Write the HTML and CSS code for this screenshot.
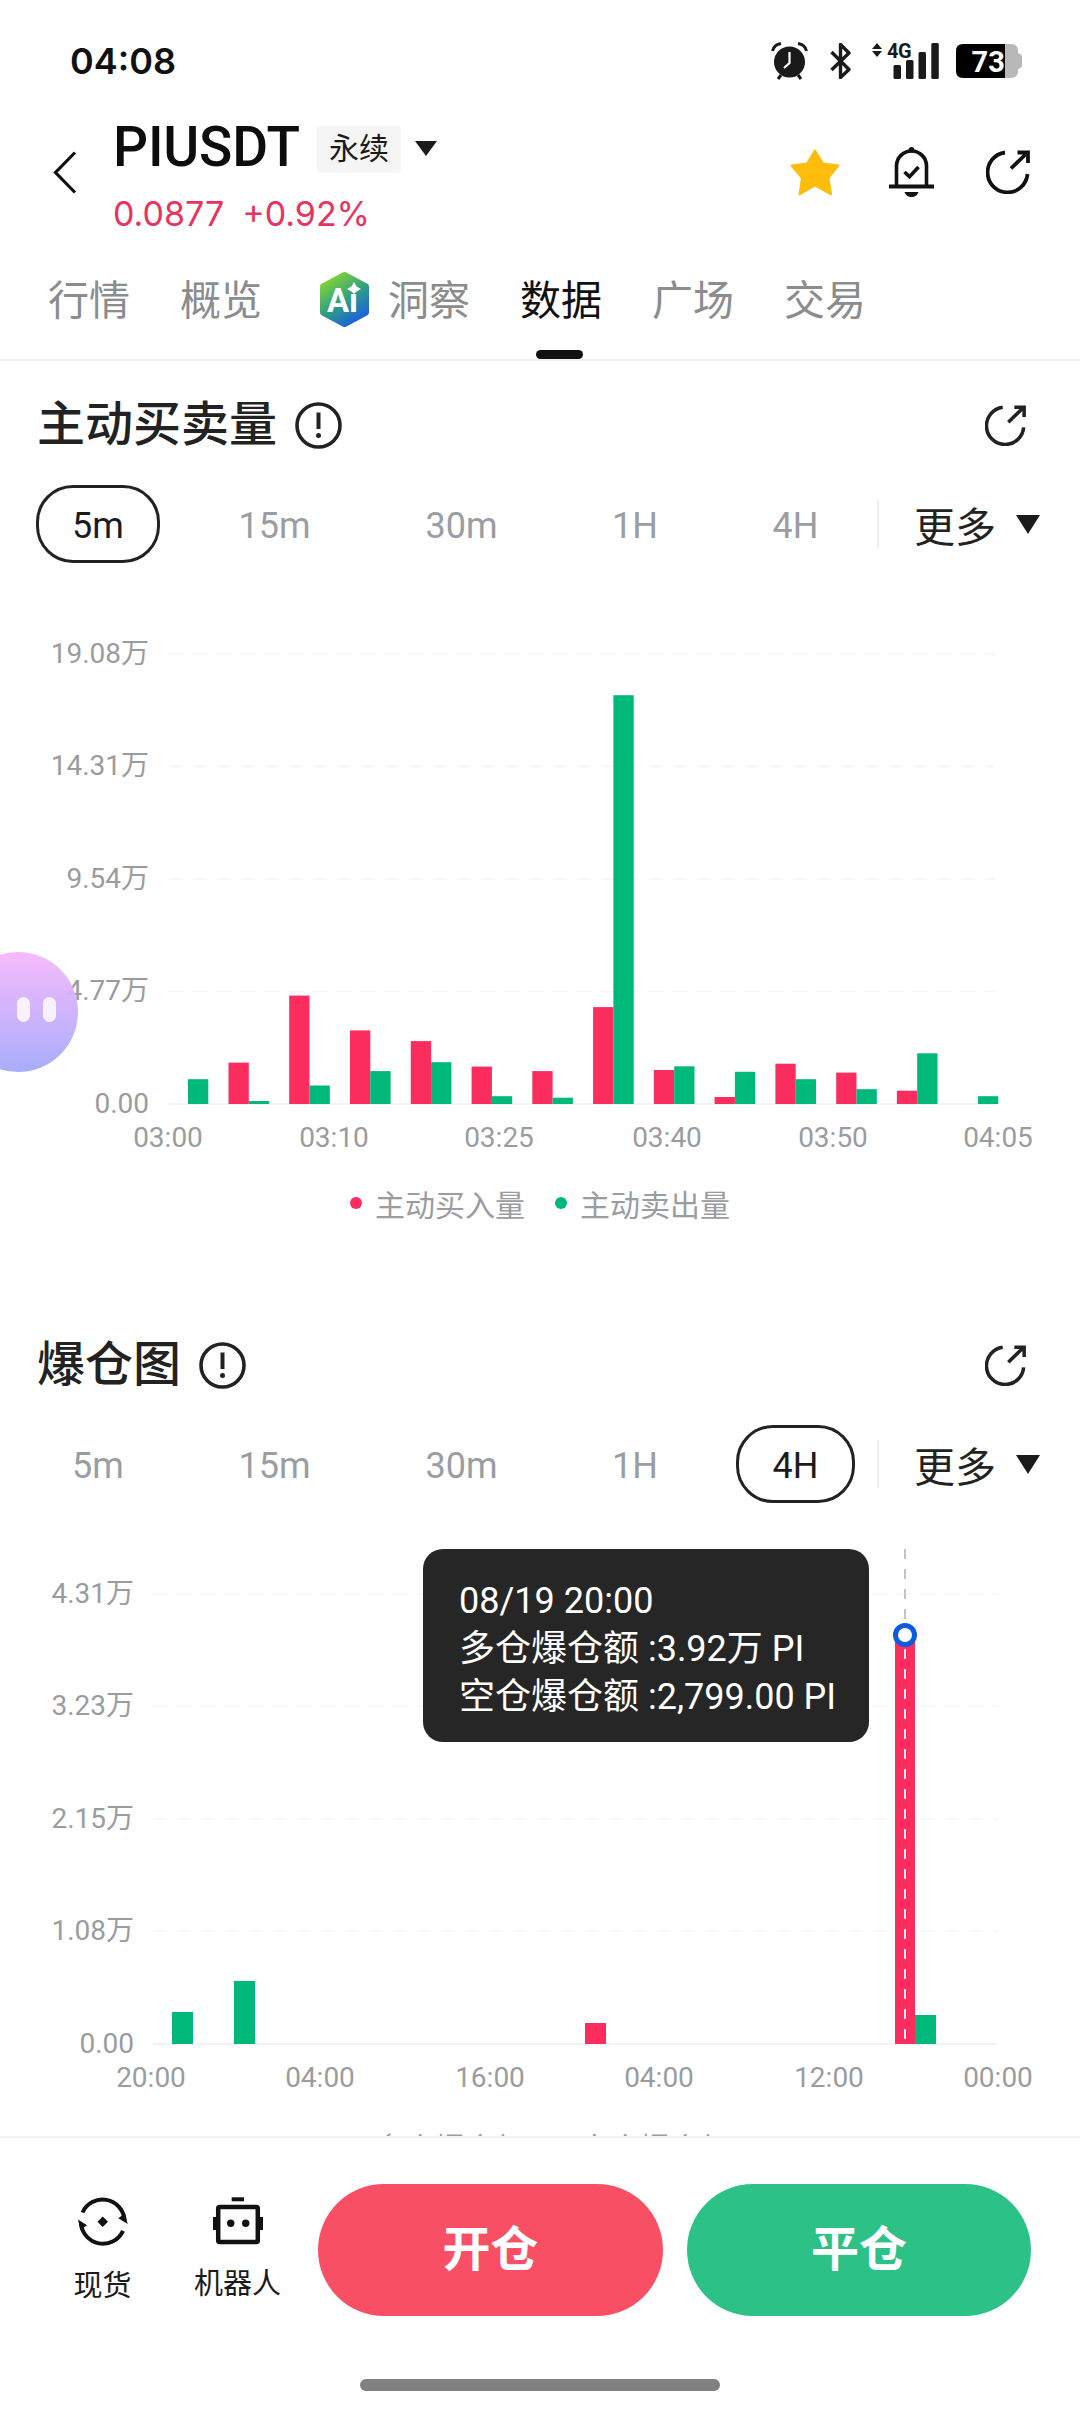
FILE: index.html
```html
<!DOCTYPE html>
<html lang="zh-CN">
<head>
    <meta charset="UTF-8">
    <meta name="viewport" content="width=device-width, initial-scale=1.0">
    <title>PIUSDT 数据</title>
    <link rel="stylesheet" href="styles.css">
</head>

<body>
<div class="page">
    <!-- 状态栏 -->
    <div class="status">
        <span class="time">04:08</span>
        <div class="status-icons">
            <svg class="ic-alarm" width="37" height="38" viewBox="0 0 37 38">
                <circle cx="18.5" cy="20" r="15.5" fill="#1a1a1a"/>
                <path d="M18.5 10V21L13 26" fill="none" stroke="#fff" stroke-width="2.2"/>
                <path d="M1.5 9Q3 2.5 10 1.5M35.5 9Q34 2.5 27 1.5M7 37L10 33M30 37L27 33" fill="none" stroke="#1a1a1a" stroke-width="3"/>
            </svg>
            <svg class="ic-bt" width="21" height="36" viewBox="0 0 21 36">
                <path d="M1.5 9L19 26.5L10.5 34.5V1.5L19 10L1.5 27" fill="none" stroke="#1a1a1a" stroke-width="3.4" stroke-linejoin="round"/>
            </svg>
            <svg class="ic-signal" width="67" height="36" viewBox="0 0 67 36">
                <path d="M0 6L5 0L10 6ZM0 8H10L5 14Z" fill="#1a1a1a"/>
                <text class="net-text" x="15" y="15">4G</text>
                <rect x="21.5" y="22" width="7.5" height="14" rx="1.5"/>
                <rect x="34" y="17" width="7.5" height="19" rx="1.5"/>
                <rect x="46.5" y="9" width="7.5" height="27" rx="1.5"/>
                <rect x="59.3" y="0" width="7.5" height="36" rx="1.5"/>
            </svg>
            <svg class="ic-battery" width="66" height="34" viewBox="0 0 66 34">
                <path d="M49 0H55Q62 0 62 7V9Q66 10 66 13V21Q66 24 62 25V27Q62 34 55 34H49Z" fill="#b8b8b8"/>
                <path d="M7 0H49V34H7Q0 34 0 27V7Q0 0 7 0Z" fill="#000"/>
                <text class="batt-text" x="15.5" y="28">73</text>
            </svg>
        </div>
    </div>

    <!-- 标题 -->
    <div class="header">
        <svg class="back" width="24" height="43" viewBox="0 0 24 43">
            <path d="M22 1.5L2.5 21.5L22 41.5" fill="none" stroke="#111" stroke-width="3.2"/>
        </svg>
        <div class="title-block">
            <div class="title-line">
                <span class="symbol">PIUSDT</span>
                <span class="tag">永续</span>
                <span class="tri tri-title"></span>
            </div>
            <div class="price-line"><span>0.0877</span><span>+0.92%</span></div>
        </div>
        <div class="actions">
            <svg width="50" height="47" viewBox="0 0 50 47">
                <path d="M25 1.5L33 14.5L48.5 16.5L38.5 29L41 45.5L25 36.5L9.5 45.5L12 29L1.5 16.5L17 14.5Z" fill="#fdbd0a" stroke="#fdbd0a" stroke-width="2" stroke-linejoin="round"/>
            </svg>
            <svg width="45" height="50" viewBox="0 0 45 50">
                <circle cx="22.5" cy="2.8" r="2.8" fill="#111"/>
                <path d="M7.5 38V19A15 15 0 0 1 37.5 19V38" fill="none" stroke="#111" stroke-width="3.6"/>
                <path d="M0 39.5H45" stroke="#111" stroke-width="4"/>
                <path d="M15.5 45H29.5Q28 50 22.5 50Q17 50 15.5 45Z" fill="#111"/>
                <path d="M15.5 25L20.5 29.8L29.5 20" fill="none" stroke="#111" stroke-width="3.6"/>
            </svg>
            <svg class="share" width="44" height="44" viewBox="0 0 44 44">
                <use href="#icon-share"/>
            </svg>
        </div>
    </div>

    <!-- 切换标签 -->
    <div class="tabs">
        <span class="tab">行情</span>
        <span class="tab">概览</span>
        <span class="tab tab-ai">
            <svg width="49" height="55" viewBox="0 0 49 55">
                <defs>
                    <linearGradient id="aiGrad" x1="0.2" y1="0.05" x2="0.75" y2="1">
                        <stop offset="0" stop-color="#7fd138"/>
                        <stop offset="0.5" stop-color="#2e9f83"/>
                        <stop offset="1" stop-color="#1a5fe0"/>
                    </linearGradient>
                </defs>
                <path d="M24.5 3L46 14.5V40.5L24.5 52L3 40.5V14.5Z" fill="url(#aiGrad)" stroke="url(#aiGrad)" stroke-width="6" stroke-linejoin="round"/>
                <text class="ai-text" x="7" y="40">A</text>
                <text class="ai-text" x="29" y="40">ı</text>
                <path d="M34 10L36.5 14.5L41 17L36.5 19.5L34 22L31.5 19.5L27 17L31.5 14.5Z" fill="#fff"/>
            </svg>
            洞察
        </span>
        <span class="tab active">数据</span>
        <span class="tab">广场</span>
        <span class="tab">交易</span>
    </div>

    <div class="content">
        <!-- 主动买卖量 -->
        <div class="section section-volume">
            <div class="section-head">
                <span class="section-title">主动买卖量</span>
                <svg class="info" width="47" height="47" viewBox="0 0 47 47"><use href="#icon-info"/></svg>
                <svg class="head-share" width="41" height="41" viewBox="0 0 44 44"><use href="#icon-share"/></svg>
            </div>
            <div class="seg-row">
                <div class="seg">
                    <span class="seg-item on">5m</span>
                    <span class="seg-item">15m</span>
                    <span class="seg-item">30m</span>
                    <span class="seg-item">1H</span>
                    <span class="seg-item">4H</span>
                </div>
                <span class="seg-line"></span>
                <span class="more">更多</span>
                <span class="tri tri-more"></span>
            </div>
            <div class="chart">
                <svg width="1080" height="610" viewBox="0 0 1080 610">
                    <g class="grid">
                        <line x1="169" x2="995" y1="91" y2="91"/>
                        <line x1="169" x2="995" y1="203.5" y2="203.5"/>
                        <line x1="169" x2="995" y1="316" y2="316"/>
                        <line x1="169" x2="995" y1="428.5" y2="428.5"/>
                    </g>
                    <line class="base" x1="169" x2="995" y1="541" y2="541"/>
                    <g class="tick tick-y">
                        <text x="149" y="100">19.08万</text>
                        <text x="149" y="212">14.31万</text>
                        <text x="149" y="325">9.54万</text>
                        <text x="149" y="437">4.77万</text>
                        <text x="149" y="550">0.00</text>
                    </g>
                    <g class="tick tick-x">
                        <text x="168" y="584">03:00</text>
                        <text x="334" y="584">03:10</text>
                        <text x="499" y="584">03:25</text>
                        <text x="667" y="584">03:40</text>
                        <text x="833" y="584">03:50</text>
                        <text x="998" y="584">04:05</text>
                    </g>
                    <g class="bar-buy">
                        <rect x="228.5" y="499.6" width="20.3" height="41.4"/>
                        <rect x="289.2" y="432.6" width="20.3" height="108.4"/>
                        <rect x="350" y="467.4" width="20.3" height="73.6"/>
                        <rect x="410.8" y="478.1" width="20.3" height="62.9"/>
                        <rect x="471.6" y="503.6" width="20.3" height="37.4"/>
                        <rect x="532.3" y="508.1" width="20.3" height="32.9"/>
                        <rect x="593.1" y="444.1" width="20.3" height="96.9"/>
                        <rect x="653.9" y="507" width="20.3" height="34"/>
                        <rect x="714.6" y="534" width="20.3" height="7"/>
                        <rect x="775.4" y="500.7" width="20.3" height="40.3"/>
                        <rect x="836.2" y="509.6" width="20.3" height="31.4"/>
                        <rect x="896.9" y="527.7" width="20.3" height="13.3"/>
                    </g>
                    <g class="bar-sell">
                        <rect x="188" y="516.2" width="20.3" height="24.8"/>
                        <rect x="248.8" y="538" width="20.3" height="3"/>
                        <rect x="309.5" y="522.5" width="20.3" height="18.5"/>
                        <rect x="370.3" y="508.1" width="20.3" height="32.9"/>
                        <rect x="431.1" y="499.2" width="20.3" height="41.8"/>
                        <rect x="491.9" y="533.2" width="20.3" height="7.8"/>
                        <rect x="552.6" y="534.7" width="20.3" height="6.3"/>
                        <rect x="613.4" y="132.2" width="20.3" height="408.8"/>
                        <rect x="674.2" y="503.3" width="20.3" height="37.7"/>
                        <rect x="734.9" y="508.8" width="20.3" height="32.2"/>
                        <rect x="795.7" y="516.2" width="20.3" height="24.8"/>
                        <rect x="856.5" y="526.2" width="20.3" height="14.8"/>
                        <rect x="917.2" y="490.3" width="20.3" height="50.7"/>
                        <rect x="978" y="533.2" width="20.3" height="7.8"/>
                    </g>
                </svg>
            </div>
            <div class="legend">
                <span class="dot dot-buy"></span><span>主动买入量</span>
                <span class="dot dot-sell"></span><span>主动卖出量</span>
            </div>
        </div>

        <!-- 爆仓图 -->
        <div class="section">
            <div class="section-head">
                <span class="section-title">爆仓图</span>
                <svg class="info" width="47" height="47" viewBox="0 0 47 47"><use href="#icon-info"/></svg>
                <svg class="head-share" width="41" height="41" viewBox="0 0 44 44"><use href="#icon-share"/></svg>
            </div>
            <div class="seg-row">
                <div class="seg">
                    <span class="seg-item">5m</span>
                    <span class="seg-item">15m</span>
                    <span class="seg-item">30m</span>
                    <span class="seg-item">1H</span>
                    <span class="seg-item on">4H</span>
                </div>
                <span class="seg-line"></span>
                <span class="more">更多</span>
                <span class="tri tri-more"></span>
            </div>
            <div class="chart">
                <svg width="1080" height="610" viewBox="0 0 1080 610">
                    <g class="grid">
                        <line x1="153" x2="997" y1="91" y2="91"/>
                        <line x1="153" x2="997" y1="203" y2="203"/>
                        <line x1="153" x2="997" y1="316" y2="316"/>
                        <line x1="153" x2="997" y1="428" y2="428"/>
                    </g>
                    <line class="base" x1="153" x2="997" y1="541" y2="541"/>
                    <g class="tick tick-y">
                        <text x="134" y="100">4.31万</text>
                        <text x="134" y="212">3.23万</text>
                        <text x="134" y="325">2.15万</text>
                        <text x="134" y="437">1.08万</text>
                        <text x="134" y="550">0.00</text>
                    </g>
                    <g class="tick tick-x">
                        <text x="151" y="584">20:00</text>
                        <text x="320" y="584">04:00</text>
                        <text x="490" y="584">16:00</text>
                        <text x="659" y="584">04:00</text>
                        <text x="829" y="584">12:00</text>
                        <text x="998" y="584">00:00</text>
                    </g>
                    <g class="bar-sell">
                        <rect x="172" y="509" width="21" height="32"/>
                        <rect x="234" y="478" width="21" height="63"/>
                        <rect x="915" y="512" width="21" height="29"/>
                    </g>
                    <g class="bar-buy">
                        <rect x="585" y="520" width="21" height="21"/>
                        <rect x="895" y="132" width="20" height="409"/>
                    </g>
                    <line class="cross" x1="905" x2="905" y1="46" y2="125"/>
                    <line class="cross cross-on" x1="905" x2="905" y1="146" y2="541"/>
                    <circle class="cross-dot" cx="905" cy="132" r="9.5"/>
                </svg>
                <div class="tooltip">
                    <div>08/19 20:00</div>
                    <div>多仓爆仓额 :3.92万 PI</div>
                    <div>空仓爆仓额 :2,799.00 PI</div>
                </div>
            </div>
            <div class="legend">
                <span class="dot dot-buy"></span><span>多仓爆仓额</span>
                <span class="dot dot-sell"></span><span>空仓爆仓额</span>
            </div>
        </div>
    </div>

    <!-- 底部操作栏 -->
    <div class="bottom">
        <div class="bottom-row">
            <div class="tool">
                <svg width="50" height="50" viewBox="0 0 50 50">
                    <path d="M4.5 15.5A22 22 0 0 1 46.5 23M45 33.8A22 22 0 0 1 3 26" fill="none" stroke="#111" stroke-width="4"/>
                    <path d="M40.3 21.3L49.7 27L47 16.3ZM9 28.3L0 22.4L2.4 33Z" fill="#111"/>
                    <path d="M24.7 19.5L30 24.7L24.7 30L19.5 24.7Z" fill="#111"/>
                </svg>
                <span>现货</span>
            </div>
            <div class="tool tool-bot">
                <svg width="52" height="48" viewBox="0 0 52 48">
                    <rect x="19.7" y="0.3" width="12.3" height="4" fill="#111"/>
                    <rect x="6.2" y="9.9" width="39.6" height="35" rx="1.5" fill="none" stroke="#111" stroke-width="4.5"/>
                    <rect x="1" y="20" width="4" height="13" fill="#111"/>
                    <rect x="47" y="20" width="4" height="13" fill="#111"/>
                    <circle cx="18.7" cy="26.3" r="3.7" fill="#111"/>
                    <circle cx="33.7" cy="26.3" r="3.7" fill="#111"/>
                </svg>
                <span>机器人</span>
            </div>
            <div class="btn btn-open">开仓</div>
            <div class="btn btn-close">平仓</div>
        </div>
        <div class="home-bar"></div>
    </div>

    <!-- 悬浮球 -->
    <div class="float-ball"><i></i><i></i></div>
</div>

<!-- 公用图标 -->
<svg class="defs" width="0" height="0">
    <symbol id="icon-share" viewBox="0 0 44 44">
        <path d="M19 2.5A20 20 0 1 0 41.5 24" fill="none" stroke="currentColor" stroke-width="3.8"/>
        <path d="M25 18.5L41 3M31.5 2.5H42V13" fill="none" stroke="currentColor" stroke-width="3.8"/>
    </symbol>
    <symbol id="icon-info" viewBox="0 0 47 47">
        <circle cx="23.5" cy="23.5" r="21.5" fill="none" stroke="currentColor" stroke-width="3.6"/>
        <path d="M23.5 10.5V27" stroke="currentColor" stroke-width="4"/>
        <circle cx="23.5" cy="33.5" r="2.5" fill="currentColor"/>
    </symbol>
</svg>
</body>
</html>
```

FILE: styles.css
```css
html, body {
    margin: 0;
    padding: 0;
    background-color: #fff;
}

body {
    font-family: Roboto, "Noto Sans CJK SC", sans-serif;
    color: #1b1b1b;
}

.page {
    position: relative;
    width: 1080px;
    height: 2412px;
    display: flex;
    flex-direction: column;
    overflow: hidden;
}

.defs {
    position: absolute;
}

/* 状态栏 */
.status {
    height: 122px;
    flex: none;
    display: flex;
    align-items: center;
    justify-content: space-between;
    padding: 0 58px 0 70px;
}

.time {
    font-family: Inter, sans-serif;
    font-size: 36px;
    font-weight: 600;
    color: #111;
}

.status-icons {
    display: flex;
    align-items: center;
}

.ic-bt {
    margin-left: 22px;
}

.ic-signal {
    margin-left: 21px;
    fill: #1a1a1a;
}

.ic-battery {
    margin-left: 17px;
}

.net-text {
    font-family: Roboto, sans-serif;
    font-size: 20px;
    font-weight: 700;
    letter-spacing: -0.5px;
}

.batt-text {
    font-family: Roboto, sans-serif;
    font-size: 29px;
    font-weight: 700;
    fill: #fff;
}

/* 标题 */
.header {
    height: 114px;
    flex: none;
    display: flex;
    align-items: flex-start;
    padding: 4px 50px 0 53px;
    box-sizing: border-box;
}

.back {
    margin-top: 25px;
}

.title-block {
    margin-left: 36px;
}

.title-line {
    height: 47px;
    display: flex;
    align-items: center;
}

.symbol {
    font-size: 55px;
    font-weight: 500;
    color: #0d0d0d;
    line-height: 47px;
    letter-spacing: -0.2px;
    margin-top: -4px;
}

.tag {
    margin-left: 17px;
    padding: 0 12px;
    height: 47px;
    line-height: 45px;
    font-size: 30px;
    background-color: #f5f5f5;
    border-radius: 4px;
}

.tri {
    width: 0;
    height: 0;
    border-style: solid;
    border-color: #1b1b1b transparent transparent transparent;
}

.tri-title {
    margin: -2px 0 0 14px;
    border-width: 15px 11px 0 11px;
}

.price-line {
    margin-top: 19px;
    display: flex;
    gap: 18px;
    font-family: Inter, sans-serif;
    font-size: 34px;
    line-height: 44px;
    color: #e8325f;
}

.actions {
    margin-left: auto;
    margin-top: 21px;
    display: flex;
    align-items: center;
    gap: 49px;
    color: #111;
}

.actions .share {
    margin-left: 3px;
}

/* 切换标签 */
.tabs {
    height: 125px;
    flex: none;
    box-sizing: border-box;
    display: flex;
    align-items: flex-start;
    gap: 50px;
    padding: 38px 0 0 48px;
    border-bottom: 2px solid #f1f1f1;
    font-size: 41px;
    line-height: 54px;
    color: #8a8c8e;
}

.tab {
    position: relative;
}

.tab-ai {
    display: flex;
    gap: 19px;
    margin-left: 8px;
    margin-top: -2px;
    line-height: 58px;
}

.ai-text {
    font-family: Roboto, sans-serif;
    font-size: 33px;
    font-weight: 700;
    fill: #fff;
}

.tab.active {
    color: #111;
}

.tab.active::after {
    content: "";
    position: absolute;
    left: 16px;
    top: 76px;
    width: 47px;
    height: 9px;
    border-radius: 5px;
    background-color: #111;
}

/* 内容区 */
.content {
    flex: 1;
    min-height: 0;
    overflow: hidden;
}

.section {
    padding-top: 41px;
}

.section-volume {
    padding-bottom: 65px;
}

.section-volume .legend {
    margin-top: -3px;
}

.section-head {
    height: 46px;
    display: flex;
    align-items: center;
    padding: 0 54px 0 37px;
    color: #222;
}

.section-title {
    font-size: 48px;
    font-weight: 500;
    line-height: 46px;
}

.info {
    margin-left: 18px;
}

.head-share {
    margin-left: auto;
}

.seg-row {
    margin-top: 37px;
    height: 78px;
    padding-left: 36px;
    display: flex;
    align-items: center;
}

.seg {
    display: grid;
    grid-template-columns: 124px 139px 145px 112px 119px;
    gap: 45px;
}

.seg-item {
    height: 78px;
    line-height: 83px;
    text-align: center;
    font-size: 36px;
    color: #9a9da1;
    border-radius: 37px;
    box-sizing: border-box;
}

.seg-item.on {
    color: #1b1b1b;
    border: 3px solid #222;
    line-height: 77px;
}

.seg-line {
    width: 2px;
    height: 48px;
    margin-left: 22px;
    background-color: #eeeeee;
}

.more {
    margin-left: 35px;
    font-size: 41px;
    color: #222;
}

.tri-more {
    margin-left: 20px;
    border-width: 19px 12px 0 12px;
}

/* 图表 */
.chart {
    position: relative;
}

.chart svg {
    display: block;
}

.grid line {
    stroke: #f5f5f5;
    stroke-width: 1.5;
    stroke-dasharray: 14 10;
}

.base {
    stroke: #f3f3f3;
    stroke-width: 2;
}

.tick text {
    font-family: Roboto, "Noto Sans CJK SC", sans-serif;
    font-size: 28px;
    fill: #9a9c9f;
}

.tick-y text {
    text-anchor: end;
}

.tick-x text {
    text-anchor: middle;
}

.bar-buy {
    fill: #fb2c5e;
}

.bar-sell {
    fill: #00b87a;
}

.cross {
    stroke: #c4c4c4;
    stroke-width: 2;
    stroke-dasharray: 10 10;
}

.cross-on {
    stroke: #f3f3f3;
}

.cross-dot {
    fill: #fff;
    stroke: #0a5be2;
    stroke-width: 5;
}

.tooltip {
    position: absolute;
    left: 423px;
    top: 46px;
    width: 446px;
    height: 193px;
    box-sizing: border-box;
    padding: 28px 0 0 36px;
    border-radius: 20px;
    background-color: #262626;
    color: #fff;
    font-size: 36px;
    line-height: 48px;
}

.legend {
    height: 66px;
    display: flex;
    align-items: center;
    justify-content: center;
    font-size: 30px;
    color: #9a9c9f;
}

.dot {
    width: 12px;
    height: 12px;
    margin-right: 13px;
    border-radius: 50%;
}

.dot-buy {
    background-color: #fb2c5e;
}

.dot-sell {
    margin-left: 30px;
    background-color: #00b87a;
}

/* 底部操作栏 */
.bottom {
    height: 276px;
    flex: none;
    box-sizing: border-box;
    border-top: 2px solid #f2f2f2;
    background-color: #fff;
}

.bottom-row {
    display: flex;
    align-items: flex-start;
    padding: 46px 49px 0 74px;
}

.tool {
    width: 57px;
    margin-top: 13px;
    display: flex;
    flex-direction: column;
    align-items: center;
    gap: 22px;
    font-size: 29px;
    line-height: 34px;
    color: #1b1b1b;
    white-space: nowrap;
}

.tool-bot {
    width: 87px;
    margin-left: 63px;
}

.btn {
    height: 132px;
    line-height: 132px;
    text-align: center;
    border-radius: 66px;
    color: #fff;
    font-size: 48px;
    font-weight: 700;
}

.btn-open {
    width: 345px;
    margin-left: 37px;
    background-color: #f94f65;
}

.btn-close {
    width: 344px;
    margin-left: 24px;
    background-color: #2cc287;
}

.home-bar {
    width: 360px;
    height: 12px;
    margin: 63px auto 0;
    border-radius: 6px;
    background-color: #808080;
}

/* 悬浮球 */
.float-ball {
    position: absolute;
    left: -42px;
    top: 952px;
    width: 120px;
    height: 120px;
    border-radius: 50%;
    background: linear-gradient(#f6b8fb, #a5a9fb);
    opacity: 0.95;
}

.float-ball i {
    position: absolute;
    top: 45px;
    width: 13px;
    height: 25px;
    border-radius: 7px;
    background-color: #f7f2fe;
}

.float-ball i:first-child {
    left: 59px;
}

.float-ball i:last-child {
    left: 85px;
}
```
